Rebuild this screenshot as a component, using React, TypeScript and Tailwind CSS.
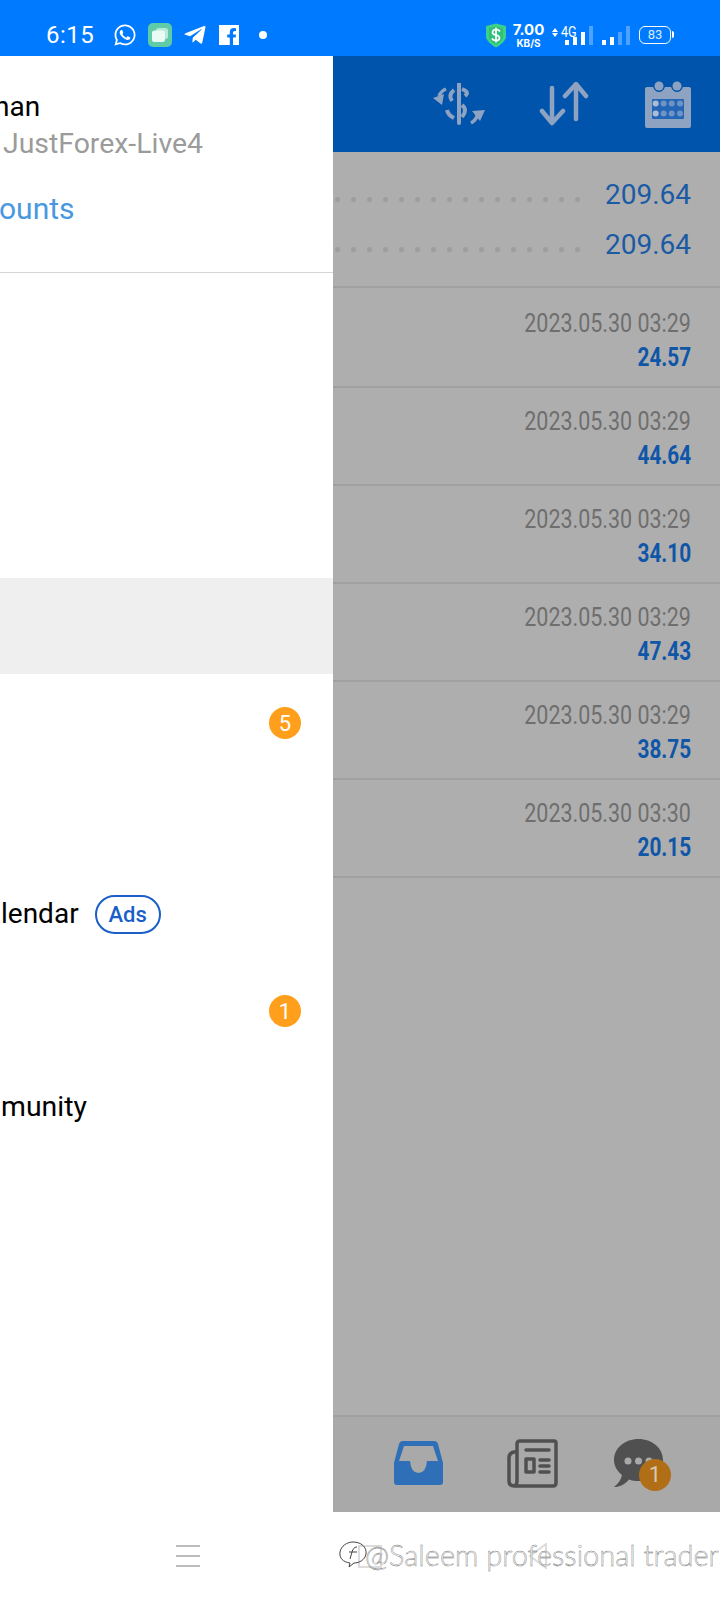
import React from "react";
import { FaWhatsapp, FaTelegramPlane } from "react-icons/fa";

function Signal({ first }: { first?: boolean }) {
  const bars = first
    ? [["h-[5px]", "bg-white"], ["h-[8px]", "bg-white"], ["h-[13px]", "bg-white"], ["h-[19px]", "bg-[#4da3ff]"]]
    : [["h-[5px]", "bg-white"], ["h-[8px]", "bg-white"], ["h-[13px]", "bg-[#4da3ff]"], ["h-[19px]", "bg-[#4da3ff]"]];
  return (
    <div className="flex items-end gap-[4px] h-[20px]">
      {bars.map((b, i) => (
        <div key={i} className={`w-[4px] ${b[0]} ${b[1]}`} />
      ))}
    </div>
  );
}

function StatusBar() {
  return (
    <div className="h-14 shrink-0 bg-[#007bff] flex items-center text-white pt-[14px] pl-[46px]">
      <span className="text-[24px] w-[67px] tracking-[0.5px] font-['Roboto',sans-serif]">6:15</span>
      <FaWhatsapp className="w-[24px] h-[24px]" />
      <svg className="ml-[11px] w-[24px] h-[24px]" viewBox="0 0 24 24">
        <rect width="24" height="24" rx="5" fill="#5fcba8" />
        <rect x="8" y="5" width="12" height="11" rx="2.5" fill="#b9e9d9" />
        <rect x="4" y="7.5" width="13" height="11.5" rx="2.5" fill="#eafaf5" />
      </svg>
      <FaTelegramPlane className="ml-[11px] w-[24px] h-[24px]" />
      <svg className="ml-[12px] w-[20px] h-[20px]" viewBox="0 0 20 20">
        <path d="M0 0 H20 V20 H14 V12.5 H16.6 L17 9.5 H14 V7.5 Q14 6 15.6 6 H17 V3.3 Q16 3.1 14.8 3.1 Q10.8 3.1 10.8 7.2 V9.5 H8.2 V12.5 H10.8 V20 H0 Z" fill="#fff" />
      </svg>
      <div className="ml-[20px] w-[8px] h-[8px] rounded-full bg-white" />
      <svg className="ml-[218px] w-[22px] h-[25px]" viewBox="0 0 22 25">
        <path d="M1 3 L11 0.5 L21 3 V15 Q18 21 11 24.5 Q4 21 1 15 Z" fill="#3ed08a" />
        <path d="M4 5 L11 3.5 L18 5 V14.5 Q16 19 11 21.5 Q6 19 4 14.5 Z" fill="#2fc07a" />
        <path d="M15 8.5 Q14 6.5 11 6.5 Q7.5 6.5 7.5 9.5 Q7.5 11.5 11 12 Q14.5 12.8 14.5 15 Q14.5 17.5 11 17.5 Q8 17.5 7 15.5 M11 4.5 V19.5" fill="none" stroke="#fff" strokeWidth="1.7" />
      </svg>
      <div className="ml-[5px] w-[33px] flex flex-col items-center leading-none font-['Inter',sans-serif] font-bold">
        <span className="text-[15px] h-[15px]">7.00</span>
        <span className="text-[10px] mt-[1px]">KB/S</span>
      </div>
      <div className="ml-[7px] w-[6px] flex flex-col gap-[1px] items-center -mt-[6px]">
        <div className="w-0 h-0 border-x-[3px] border-x-transparent border-b-[4px] border-b-white" />
        <div className="w-0 h-0 border-x-[3px] border-x-transparent border-t-[4px] border-t-white" />
      </div>
      <div className="relative ml-[2px] w-[33px] h-[20px] flex justify-end">
        <span className="absolute left-[1px] top-0 text-[14px] leading-none font-['Roboto',sans-serif] scale-x-90 origin-left">4G</span>
        <Signal first />
      </div>
      <div className="ml-[9px]"><Signal /></div>
      <div className="relative ml-[9px] w-[32px] h-[18px] rounded-[6px] border-[1.5px] border-white flex items-center justify-center text-[13px] font-['Roboto',sans-serif] text-[#d8ebff]">
        83
        <div className="absolute -right-[4px] top-[4px] w-[2px] h-[7px] rounded-r-[2px] bg-white" />
      </div>
    </div>
  );
}

function Drawer() {
  return (
    <div className="w-[333px] shrink-0 bg-white flex flex-col font-['Roboto',sans-serif] overflow-hidden">
      <div className="h-[217px] shrink-0 border-b-[1.5px] border-[#d4d4d4] pt-[36px]">
        <div className="text-[28px] leading-[30px] text-black -ml-[6px]">han</div>
        <div className="text-[28.4px] leading-[30px] mt-[7px] pl-[3px] text-[#9b9b9b]">JustForex-Live4</div>
        <div className="text-[30px] leading-[30px] mt-[35px] -ml-[1px] text-[#4a98e0]">ounts</div>
      </div>
      <div className="pt-[17px] flex flex-col">
        <div className="h-[96px]" />
        <div className="h-[96px]" />
        <div className="h-[96px]" />
        <div className="h-[96px] bg-[#efefef]" />
        <div className="h-[96px] flex items-center justify-end pr-[32px]">
          <div className="mt-[2px]"><Badge n="5" /></div>
        </div>
        <div className="h-[96px]" />
        <div className="h-[96px] flex items-center text-[28px] text-black">
          <span className="pl-[1px]">lendar</span>
          <span className="ml-[16px] w-[66px] h-[39px] rounded-full border-2 border-[#1a5fc8] text-[#1a5fc8] text-[22px] font-medium flex items-center justify-center">Ads</span>
        </div>
        <div className="h-[96px] flex items-center justify-end pr-[32px]">
          <div className="mt-[2px]"><Badge n="1" /></div>
        </div>
        <div className="h-[96px] flex items-center text-[28.4px] text-black">
          <span className="pl-[1px] mt-[2px]">munity</span>
        </div>
      </div>
    </div>
  );
}

function Badge({ n }: { n: string }) {
  return (
    <div className="w-[32px] h-[32px] rounded-full bg-[#ff9f1c] text-white text-[22px] flex items-center justify-center">{n}</div>
  );
}

function ExchangeIcon() {
  return (
    <svg className="w-[54px] h-[42px]" viewBox="0 0 54 42" fill="none" stroke="#8ea3c2">
      <path d="M27 1 V40" strokeWidth="4" strokeLinecap="round" />
      <path d="M30 6 Q38 9 33 13" strokeWidth="4" />
      <path d="M30 22 Q36 27 30 34" strokeWidth="4" />
      <path d="M22 7 Q16 12 20 18" strokeWidth="4" />
      <path d="M15 27 Q16 32 22 35" strokeWidth="4" />
      <path d="M14 6 Q9 8 7 13" strokeWidth="3.5" />
      <path d="M1 15 L12 11 L10 22 Z" fill="#8ea3c2" stroke="none" />
      <path d="M39 40 Q46 36 46 28" strokeWidth="3.5" />
      <path d="M40 28 L53 27 L48 38 Z" fill="#8ea3c2" stroke="none" />
    </svg>
  );
}

function ArrowsIcon() {
  return (
    <svg className="w-[50px] h-[44px]" viewBox="0 0 50 44" fill="none" stroke="#8ea3c2" strokeWidth="4.5" strokeLinecap="round" strokeLinejoin="round">
      <path d="M13 6 V40 M3 29 L13 41 L24 29" />
      <path d="M37 3 V37 M26 14 L37 2 L47 14" />
    </svg>
  );
}

function CalendarIcon() {
  return (
    <svg className="w-[46px] h-[48px]" viewBox="0 0 46 48" fill="#8ea3c2">
      <circle cx="14" cy="6" r="4.5" />
      <circle cx="32" cy="6" r="4.5" />
      <path d="M2 7 H8 Q10 12 14 12 Q18 12 20 7 H26 Q28 12 32 12 Q36 12 38 7 H44 Q46 7 46 9 V46 Q46 48 44 48 H2 Q0 48 0 46 V9 Q0 7 2 7 Z" />
      <rect x="7" y="19" width="32" height="20" rx="1" fill="#2466b6" />
      {[10.7, 18.7, 26.7, 35].map((x, i) => (
        <React.Fragment key={x}>
          <circle cx={x} cy="23.6" r="3" fill={i === 0 ? "#a9bdd6" : "#6f93c4"} />
          <circle cx={x} cy="33.6" r="3" fill={i === 0 ? "#a9bdd6" : "#6f93c4"} />
        </React.Fragment>
      ))}
    </svg>
  );
}

function Dots() {
  return (
    <div className="flex gap-[11px] ml-[2px]">
      {Array.from({ length: 16 }).map((_, i) => (
        <div key={i} className="w-[5px] h-[5px] rounded-full bg-[#9d9d9d]" />
      ))}
    </div>
  );
}

function Summary() {
  return (
    <div className="h-[136px] shrink-0 border-b-2 border-[#a0a0a0] pt-[28px] flex flex-col gap-[20px]">
      {[0, 1].map((i) => (
        <div key={i} className="h-[30px] flex items-center justify-between pr-[29px]">
          <div className="mt-[9px]"><Dots /></div>
          <span className="text-[28px] leading-[30px] text-[#1b5aa5]">209.64</span>
        </div>
      ))}
    </div>
  );
}

const deals = [
  ["2023.05.30 03:29", "24.57"],
  ["2023.05.30 03:29", "44.64"],
  ["2023.05.30 03:29", "34.10"],
  ["2023.05.30 03:29", "47.43"],
  ["2023.05.30 03:29", "38.75"],
  ["2023.05.30 03:30", "20.15"],
];

function Deals() {
  return (
    <div className="flex-1 flex flex-col">
      {deals.map(([d, v], i) => (
        <div
          key={i}
          className={`${i === 0 ? "h-[100px] pt-[20px]" : "h-[98px] pt-[18px]"} shrink-0 border-b-2 border-[#a0a0a0] pr-[29px] flex flex-col items-end`}
        >
          <span className="text-[26px] leading-[30px] text-[#6e6e6e] scale-x-[0.825] origin-right whitespace-nowrap">{d}</span>
          <span className="text-[26px] leading-[30px] mt-[4px] font-bold text-[#0f56a8] scale-x-[0.8] origin-right">{v}</span>
        </div>
      ))}
    </div>
  );
}

function BottomNav() {
  return (
    <div className="h-[97px] shrink-0 bg-[#a9a9a9] border-t-2 border-[#a0a0a0] flex items-center justify-end pr-[57px]">
      <svg className="w-[49px] h-[44px] -mt-[4px]" viewBox="0 0 49 44" fill="#2e6fb7">
        <path d="M9 0 H40 Q43 0 44 3 L49 22 V41 Q49 44 46 44 H3 Q0 44 0 41 V22 L5 3 Q6 0 9 0 Z" />
        <path d="M10 5 H39 L44 20 H33 Q32 32 24.5 32 Q17 32 16 20 H5 Z" fill="#a9a9a9" />
      </svg>
      <svg className="ml-[64px] w-[51px] h-[49px] -mt-[2px]" viewBox="0 0 51 49" fill="none" stroke="#505050" strokeWidth="3.5" strokeLinejoin="round">
        <path d="M9 13 H7 Q2 14 2 19 V42 Q2 47 8 47 H46 Q49 47 49 44 V4 Q49 2 47 2 H13 Q10 2 10 5 V42 Q10 47 6 47" />
        <path d="M19 11 H42" strokeLinecap="round" />
        <rect x="19" y="20" width="8" height="13" fill="none" />
        <path d="M33 21 H42 M33 27 H42 M33 33 H42" strokeLinecap="round" />
      </svg>
      <div className="relative ml-[56px] w-[49px] h-[49px] -mt-[3px]">
        <svg className="w-[49px] h-[49px]" viewBox="0 0 49 49">
          <path d="M24.5 0 C38 0 49 9 49 21 C49 33 38 42 24.5 42 C21 42 18 41.5 15 40.5 C10 46 6 48 0 48 C4 45 7 41 8 36 C3 32 0 27 0 21 C0 9 11 0 24.5 0 Z" fill="#505050" />
          <circle cx="14" cy="22" r="3.5" fill="#a9a9a9" />
          <circle cx="24.5" cy="22" r="3.5" fill="#a9a9a9" />
          <circle cx="35" cy="22" r="3.5" fill="#a9a9a9" />
        </svg>
        <div className="absolute left-[25px] top-[20px] w-[32px] h-[32px] rounded-full bg-[#b06f16] text-[#d9c9b0] text-[22px] flex items-center justify-center">1</div>
      </div>
    </div>
  );
}

function SystemBar() {
  return (
    <div className="relative h-[88px] shrink-0 bg-white">
      <div className="absolute left-[176px] top-[33px] w-[24px] flex flex-col gap-[8px]">
        <div className="h-[2px] bg-[#bdbdbd]" />
        <div className="h-[2px] bg-[#bdbdbd]" />
        <div className="h-[2px] bg-[#bdbdbd]" />
      </div>
      <div className="absolute left-[358px] top-[33px] w-[24px] h-[23px] border-2 border-[#dcdcdc]" />
      <svg className="absolute left-[528px] top-[31px] w-[20px] h-[26px]" viewBox="0 0 20 26" fill="none" stroke="#dcdcdc" strokeWidth="2">
        <path d="M18 1 L2 13 L18 25 Z" />
      </svg>
      <div className="absolute left-[337px] top-[26px] flex items-center">
        <svg className="w-[32px] h-[30px]" viewBox="0 0 32 30" fill="none" stroke="#444" strokeWidth="1">
          <path d="M16 2 C24 2 30 7 29 14 C28 20 22 23 17 23 L12 27 L13 23 C6 22 2 18 3 12 C4 6 10 2 16 2 Z" />
          <path d="M20 7 C17 7 16 9 15 12 L13 19 M12 12 H20" />
        </svg>
        <span className="-ml-[4px] text-[29px] leading-[34px] whitespace-nowrap font-['Lato',sans-serif] font-light text-white [-webkit-text-stroke:0.4px_#6e6e6e]">@Saleem professional trader</span>
      </div>
    </div>
  );
}

export default function App() {
  return (
    <div className="w-[720px] h-[1600px] flex flex-col overflow-hidden bg-white font-['Roboto',sans-serif]">
      <StatusBar />
      <div className="flex-1 flex min-h-0">
        <Drawer />
        <div className="flex-1 flex flex-col bg-[#aeaeae] min-w-0">
          <div className="h-[96px] shrink-0 bg-[#0054ab] flex items-center justify-end pr-[29px]">
            <ExchangeIcon />
            <div className="ml-[53px] mr-[-1px]"><ArrowsIcon /></div>
            <div className="ml-[57px]"><CalendarIcon /></div>
          </div>
          <Summary />
          <Deals />
          <BottomNav />
        </div>
      </div>
      <SystemBar />
    </div>
  );
}
